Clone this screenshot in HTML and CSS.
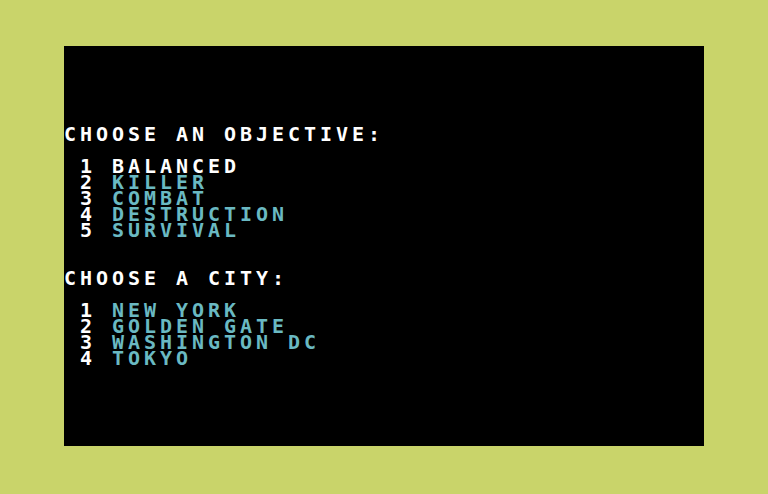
FILE: index.html
```html
<!DOCTYPE html>
<html lang="en">
<head>
  <meta charset="UTF-8" />
  <title>Choose an objective</title>
  <link rel="stylesheet" href="styles.css">
</head>
<body>
  <div class="screen">
    <div class="heading">CHOOSE AN OBJECTIVE:</div>
    <ul class="menu">
      <li><span class="num">1</span><span class="pick">BALANCED</span></li>
      <li><span class="num">2</span>KILLER</li>
      <li><span class="num">3</span>COMBAT</li>
      <li><span class="num">4</span>DESTRUCTION</li>
      <li><span class="num">5</span>SURVIVAL</li>
    </ul>

    <div class="heading city">CHOOSE A CITY:</div>
    <ul class="menu">
      <li><span class="num">1</span>NEW YORK</li>
      <li><span class="num">2</span>GOLDEN GATE</li>
      <li><span class="num">3</span>WASHINGTON DC</li>
      <li><span class="num">4</span>TOKYO</li>
    </ul>
  </div>
</body>
</html>
```

FILE: styles.css
```css
body {
  margin: 0;
  padding-top: 46px;
  background: #c9d46a;
  height: 494px;
  box-sizing: border-box;
  overflow: hidden;
}

/* 40x25 text screen, each cell 16x16 */
.screen {
  width: 640px;
  height: 400px;
  margin: 0 auto;
  background: #000;
  box-sizing: border-box;
  padding-top: 80px;
  font-family: "DejaVu Sans Mono", monospace;
  font-weight: bold;
  font-size: 20px;
  line-height: 16px;
  letter-spacing: 3.96px;
  color: #fff;
}

.heading {
  margin-bottom: 16px;
  white-space: nowrap;
}

.heading.city {
  margin-top: 32px;
}

.menu {
  list-style: none;
  margin: 0;
  padding: 0;
  color: #6ab9c2;
}

.menu li {
  display: flex;
  height: 16px;
  white-space: pre;
}

.num {
  color: #fff;
  width: 32px;
  margin-left: 16px;
}

.pick {
  color: #fff;
}
```
